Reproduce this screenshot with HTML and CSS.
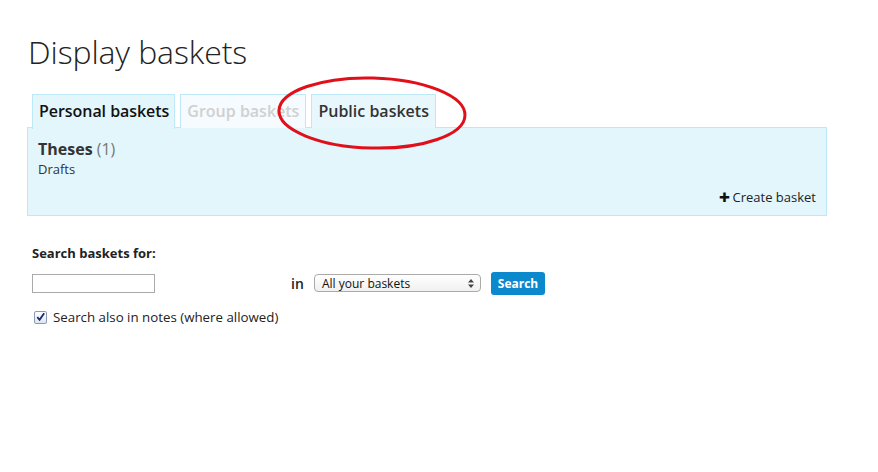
FILE: index.html
```html
<!DOCTYPE html>
<html>
<head>
<meta charset="utf-8">
<link rel="stylesheet" href="styles.css">
</head>
<body>
<div class="page">
  <h1 class="title">Display baskets</h1>
  <div class="tabs-wrap">
    <ul class="tabs">
      <li class="tab active">Personal baskets</li>
      <li class="tab disabled">Group baskets</li>
      <li class="tab public">Public baskets</li>
    </ul>
    <svg class="ring" width="196" height="78" viewBox="0 0 196 78"><ellipse cx="98" cy="39" rx="93" ry="35" fill="none" stroke="#e0101a" stroke-width="3" transform="rotate(1.5 98 39)"/></svg>
  </div>
  <div class="panel">
    <div class="basket"><span class="bname">Theses</span> <span class="bcount">(1)</span></div>
    <div class="topic">Drafts</div>
    <div class="create"><span class="plus">&#x271A;</span>Create basket</div>
  </div>
  <form class="search">
    <div class="label">Search baskets for:</div>
    <div class="row">
      <input class="text" type="text">
      <span class="in">in</span>
      <div class="select"><span>All your baskets</span><svg class="arrows" width="6" height="9" viewBox="0 0 6 9"><path d="M0 3.5 L3 0 L6 3.5 Z M0 5.5 L3 9 L6 5.5 Z" fill="#444"/></svg></div>
      <button class="btn" type="button">Search</button>
    </div>
    <label class="check"><span class="box"><svg width="12" height="12" viewBox="0 0 12 12"><path d="M2.5 6.2 L5 9 L10 2" fill="none" stroke="#1b2a6b" stroke-width="2"/></svg></span>Search also in notes (where allowed)</label>
  </form>
</div>
</body>
</html>
```
FILE: styles.css
```css
html, body { margin: 0; padding: 0; background: #fff; }
body { font-family: "Open Sans", "Liberation Sans", sans-serif; color: #333; font-size: 13px; }
.page { padding: 30px 0 0 27px; width: 800px; }
.title { margin: 0 0 0 1px; font-size: 32px; font-weight: 300; line-height: 44px; color: #222; letter-spacing: -0.1px; }
.tabs-wrap { position: relative; margin-top: 20px; }
.tabs { list-style: none; margin: 0 0 0 5px; padding: 0; display: flex; gap: 5px; height: 34px; }
.tab { box-sizing: border-box; height: 34px; padding: 0 6px; border: 1px solid #bde8f7; border-bottom: none; font-size: 16px; font-weight: 600; line-height: 33px; white-space: nowrap; }
.tab.active { background: #e2f6fc; color: #111; height: 35px; position: relative; z-index: 1; padding-left: 6px; padding-right: 5px; letter-spacing: -0.05px; }
.tab.disabled { background: #f5fbfe; color: #d0d0d0; }
.tab.public { background: #e8f7fc; color: #333; }
.ring { position: absolute; left: 247px; top: -20px; z-index: 3; }
.panel { box-sizing: border-box; height: 89px; margin-top: -1px; background: #e2f6fc; border: 1px solid #bde8f7; padding: 10px 10px 0 10px; display: flex; flex-direction: column; }
.basket { font-size: 16px; line-height: 22px; }
.bname { font-weight: 700; color: #333; }
.bcount { color: #777; }
.topic { font-size: 13px; line-height: 18px; color: #333; }
.create { margin-top: auto; margin-bottom: 9px; align-self: flex-end; font-size: 13px; color: #222; }
.plus { font-size: 13px; margin-right: 3px; color: #111; }
.search { margin: 28px 0 0 5px; }
.label { font-weight: 700; font-size: 13px; color: #222; line-height: 18px; }
.row { display: flex; align-items: center; margin-top: 9px; height: 24px; }
.text { box-sizing: border-box; width: 123px; height: 19px; border: 1px solid #aaa; padding: 0; margin: 0; }
.in { margin-left: 136px; font-size: 14px; font-weight: 600; color: #222; width: 23px; }
.select { box-sizing: border-box; width: 167px; height: 18px; border: 1px solid #aaa; border-radius: 4px; background: linear-gradient(#fff, #f0f0f0); font-size: 12px; color: #111; display: flex; justify-content: space-between; align-items: center; padding: 0 6px 0 7px; }
.arrows { display: block; }
.btn { margin-left: 10px; box-sizing: border-box; height: 23px; width: 54px; border: none; border-radius: 3px; background: #0c88cc; color: #fff; font-family: "Open Sans", sans-serif; font-weight: 700; font-size: 12px; padding: 0; }
.check { display: flex; align-items: center; margin-top: 13px; margin-left: 2px; font-size: 13.3px; color: #222; }
.box { box-sizing: border-box; width: 13px; height: 13px; border: 1px solid #8a9bb5; border-radius: 2px; background: linear-gradient(#fff, #dde6f2); display: inline-flex; align-items: center; justify-content: center; margin-right: 6px; }
```
